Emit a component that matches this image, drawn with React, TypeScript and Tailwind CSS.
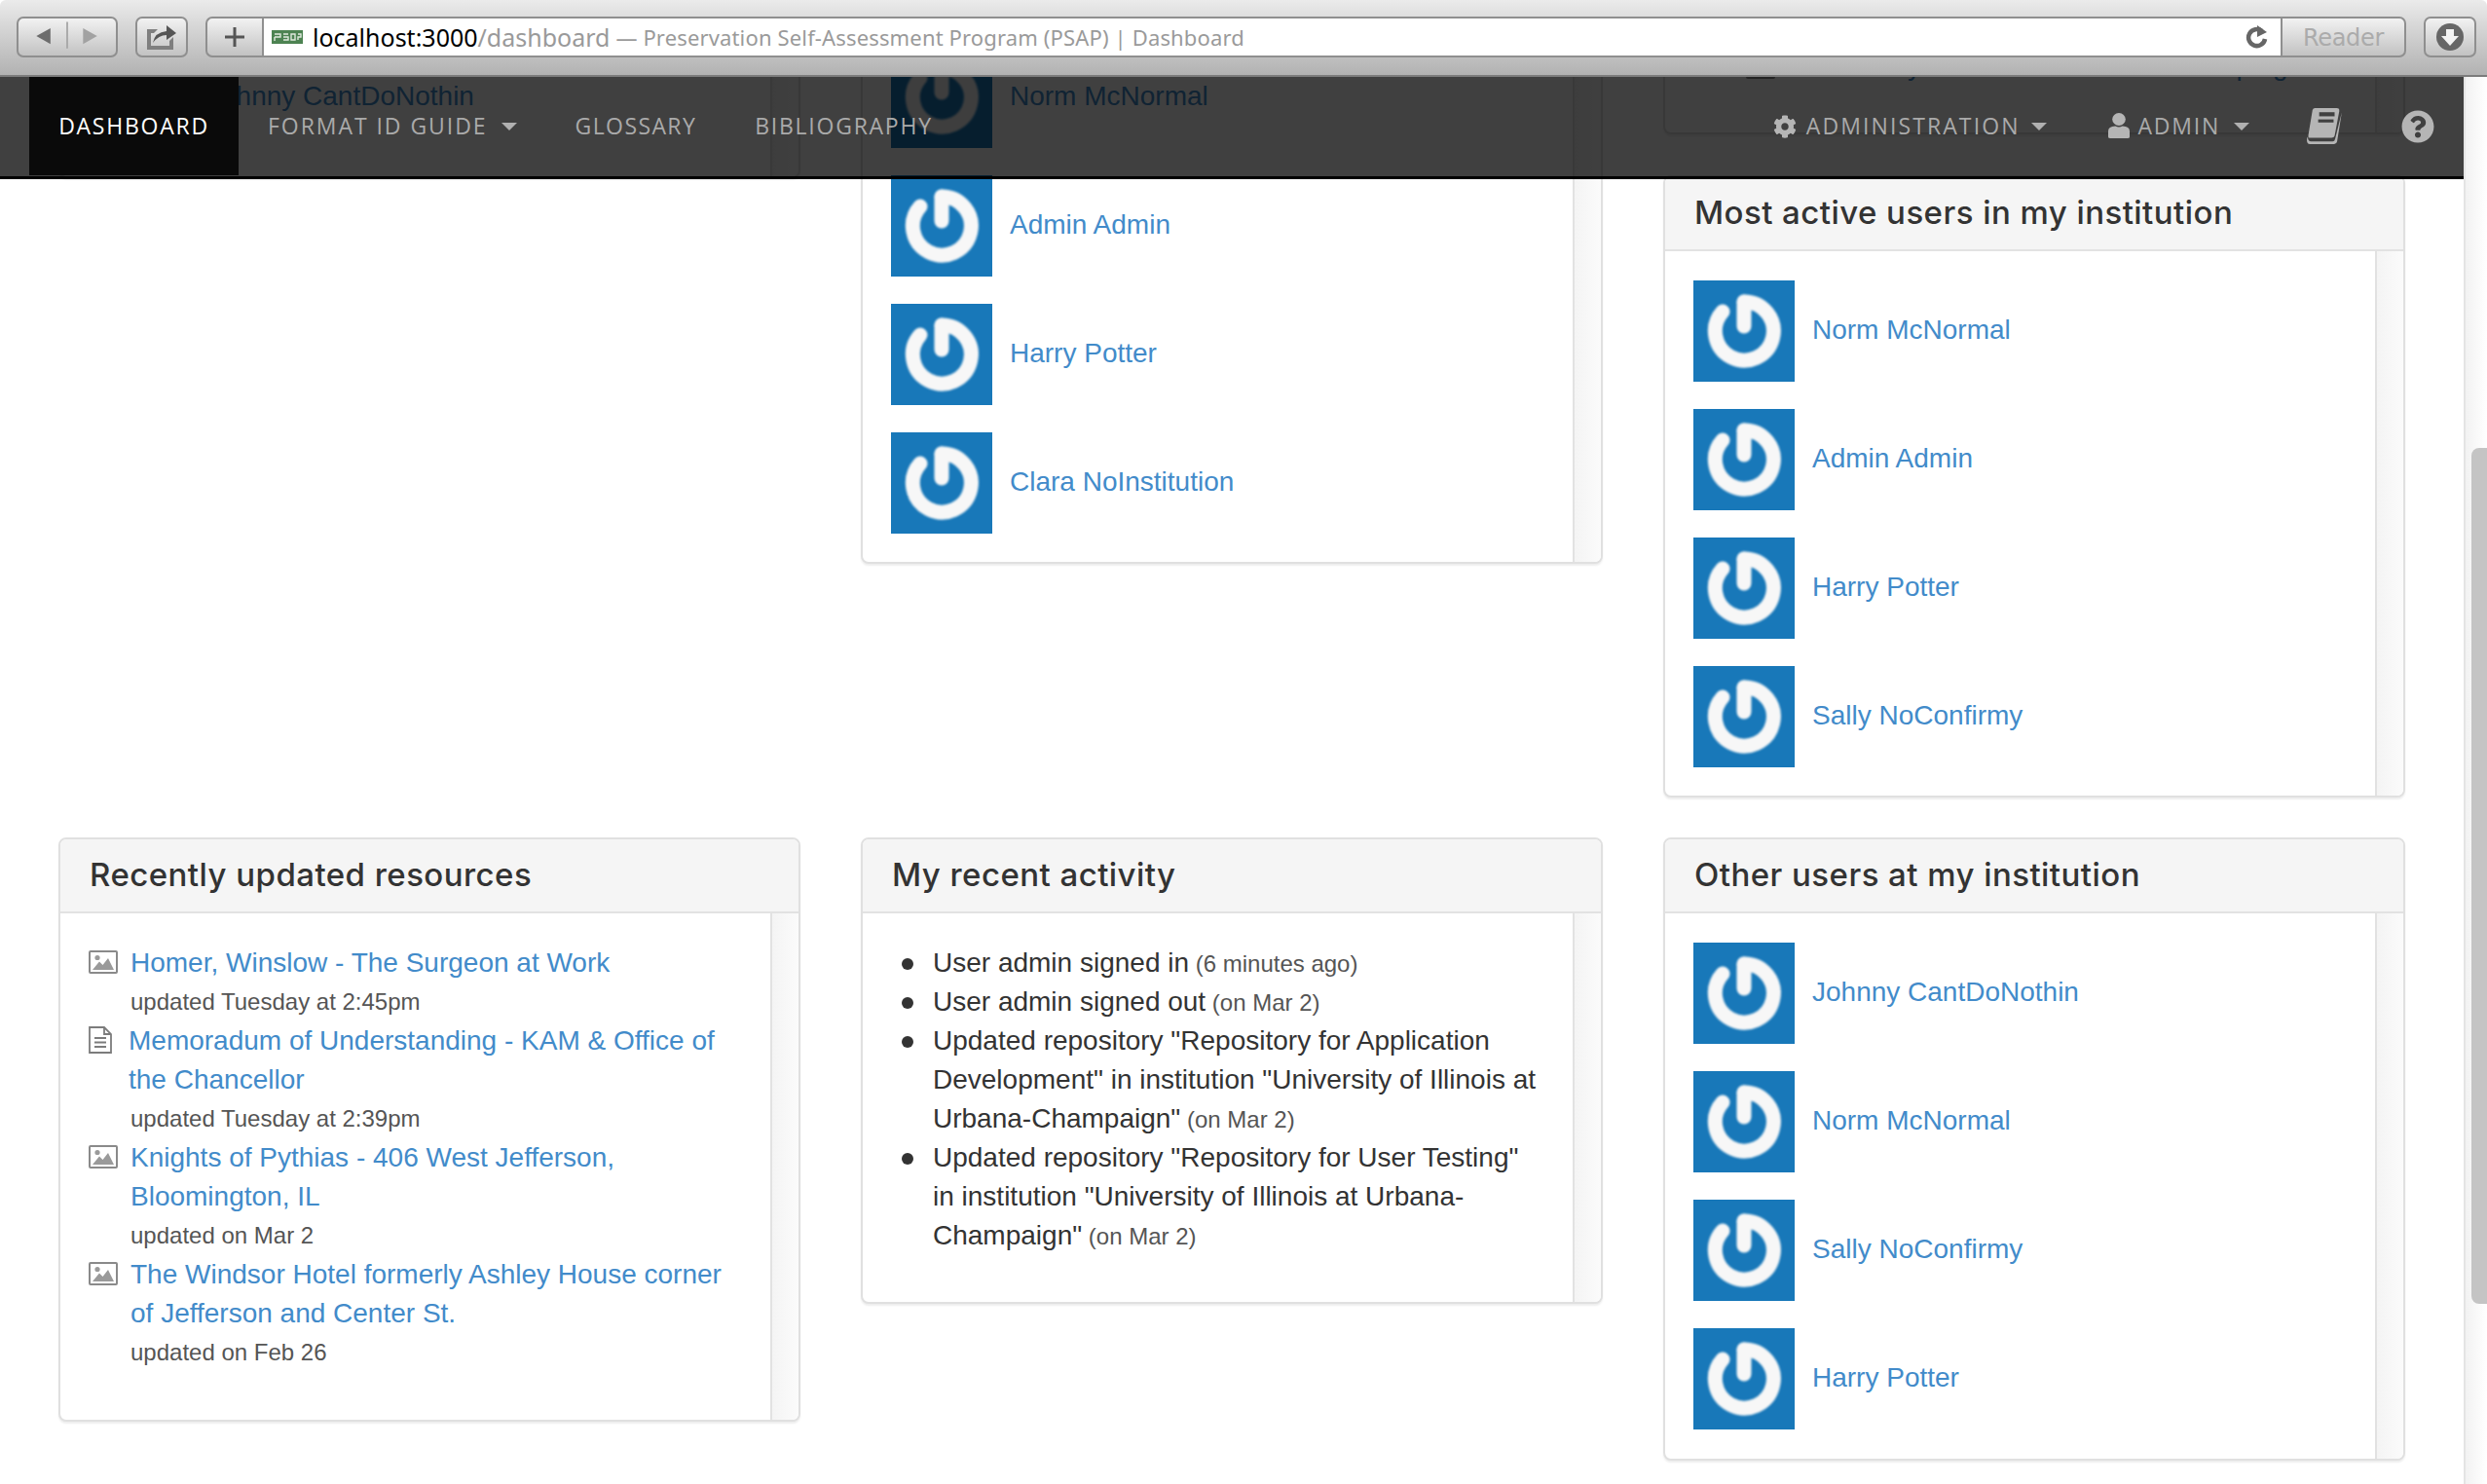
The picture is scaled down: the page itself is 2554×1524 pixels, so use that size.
import React from "react";
import { FaCog, FaQuestionCircle } from "react-icons/fa";

const Avatar = () => (
  <svg viewBox="0 0 104 104" className="w-[104px] h-[104px] shrink-0 bg-[#1878b9]">
    <g fill="none" stroke="#f7f7f7" strokeWidth="15" strokeLinecap="round" className="blur-[0.8px]">
      <path d="M52 22 A30 30 0 1 1 30 32" />
      <path d="M52 22 V47" />
    </g>
  </svg>
);

const UserRow = ({ name }: { name: string }) => (
  <div className="flex items-center gap-[18px]">
    <Avatar />
    <a className="text-[#428bca] text-[28px] leading-[40px] -mt-[3px]">{name}</a>
  </div>
);

const Panel = ({ title, children, pb = "pb-[29px]" }: { title?: string; children: React.ReactNode; pb?: string }) => (
  <section className="rounded-[8px] border-2 border-[#e0e0e0] bg-white shadow-[0_2px_2px_rgba(0,0,0,0.07)] overflow-hidden">
    <header className="h-[76px] bg-[#f5f5f5] border-b-2 border-[#e2e2e2] pl-[30px] flex items-center">
      <h3 className="font-['Inter',sans-serif] font-medium text-[33px] tracking-[0.45px] text-[#333]">{title}</h3>
    </header>
    <div className="flex items-stretch">
      <div className={`flex-1 min-w-0 pt-[30px] ${pb}`}>{children}</div>
      <div className="w-[29px] border-l-2 border-[#e2e2e2] bg-gradient-to-r from-[#f4f4f4] to-[#fbfbfb]" />
    </div>
  </section>
);

const Users = ({ names }: { names: string[] }) => (
  <div className="flex flex-col gap-[28px] pl-[29px]">
    {names.map((n) => (
      <UserRow key={n} name={n} />
    ))}
  </div>
);

const ImgIcon = () => (
  <svg viewBox="0 0 30 24" className="w-[30px] h-[24px] shrink-0 mr-[13px]">
    <rect x="1" y="1" width="28" height="22" rx="1" fill="#fff" stroke="#8a8a8a" strokeWidth="2" />
    <circle cx="9" cy="7.5" r="2.6" fill="#9a9a9a" />
    <path d="M4 20 L11 11.5 L14.5 15 L20 8 L26 20 Z" fill="#9a9a9a" />
  </svg>
);

const FileIcon = () => (
  <svg viewBox="0 0 24 28" className="w-[24px] h-[28px] shrink-0 mr-[18px]" fill="none" stroke="#7c7c7c" strokeWidth="1.8">
    <path d="M1 1 H16 L23 8 V27 H1 Z" />
    <path d="M16 1 V8 H23" />
    <path d="M6 12 H18 M6 16.5 H18 M6 21 H18" />
  </svg>
);

const Resource = ({ icon, lines, when, file }: { icon: React.ReactNode; lines: string; when: string; file?: boolean }) => (
  <div>
    <div className="flex items-start">
      <span className={file ? "mt-[5px]" : "mt-[7px]"}>{icon}</span>
      <a className={`text-[#428bca] text-[28px] leading-[40px] ${file ? "-ml-[1px]" : ""}`}>{lines}</a>
    </div>
    <div className="pl-[43px] text-[24px] leading-[40px] text-[#555]">{when}</div>
  </div>
);

const Caret = ({ small }: { small?: boolean }) => (
  <span className={`inline-block ${small ? "ml-[11px]" : "ml-[14px]"} w-0 h-0 border-x-[8px] border-x-transparent border-t-[8px] border-t-[#b0b0b0]`} />
);

const NavItem = ({ children, extra = "" }: { children: React.ReactNode; extra?: string }) => (
  <a className={`flex items-center px-[30px] text-[#aaaaaa] ${extra}`}>{children}</a>
);

const UserGlyph = () => (
  <svg viewBox="0 0 21 32" preserveAspectRatio="none" className="w-[22px] h-[26px] mr-[9px] -mt-[1px]" fill="#b5b5b5">
    <ellipse cx="10.5" cy="8" rx="6.5" ry="8" />
    <path d="M0 30 V23 Q0 17 7 16.5 Q10.5 19 14 16.5 Q21 17 21 23 V30 Q21 32 19 32 H2 Q0 32 0 30 Z" />
  </svg>
);

const BookGlyph = () => (
  <svg viewBox="0 0 36 36" className="w-[38px] h-[38px] -ml-[1px] -mr-[1px]" fill="#b5b5b5">
    <path d="M8 0 H29 Q32 0 31.5 3 L27 27 Q26.5 29 24 29 H3 Q1 29 1.5 26 L5.5 2 Q6 0 8 0 Z" />
    <path d="M34 4 L29.5 32 Q29 35 26 35 H3 Q0 35 0 31 Q0 29 1 28 Q1 32.5 4 32.5 H25 Q27 32.5 27.5 30 Z" />
    <rect x="12" y="4" width="15" height="4" fill="#404040" />
    <rect x="11" y="11" width="15" height="3" fill="#404040" />
  </svg>
);

const btn = "h-[42px] rounded-[7px] border-2 border-[#8f8f8f] bg-gradient-to-b from-[#f2f2f2] to-[#c2c2c2] flex items-center justify-center";

const Toolbar = () => (
  <div className="h-[79px] shrink-0 relative z-20 border-b-2 border-[#7c7c7c] bg-gradient-to-b from-[#ebebeb] to-[#b2b2b2] rounded-t-[6px] flex items-start pt-[17px] pl-[17px] pr-[11px]">
    <div className={`${btn} w-[104px]`}>
      <svg viewBox="0 0 104 42" className="w-[100px] h-[38px]">
        <path d="M33 11 L33 29 L17 20 Z" fill="#6d6d6d" />
        <path d="M52 4 V34" stroke="#a6a6a6" strokeWidth="2" />
        <path d="M70 11 L70 29 L86 20 Z" fill="#a2a2a2" />
      </svg>
    </div>
    <div className={`${btn} w-[54px] ml-[18px]`}>
      <svg viewBox="0 0 34 28" className="w-[34px] h-[28px]">
        <path d="M2 6 H13 L9 10 H6 V23 H25 V18 L29 14 V27 H2 Z" fill="#7f7f7f" />
        <path d="M8 20 Q10 9 22 8 V2 L32 10 L22 17 V12 Q14 12 8 20 Z" fill="#555" />
      </svg>
    </div>
    <div className={`${btn} w-[58px] ml-[18px] rounded-r-none border-r-0`}>
      <svg viewBox="0 0 20 20" className="w-[20px] h-[20px]">
        <path d="M10 0 V20 M0 10 H20" stroke="#555" strokeWidth="3" />
      </svg>
    </div>
    <div className="h-[42px] flex-1 min-w-0 border-y-2 border-l-2 border-[#8f8f8f] bg-white flex items-center pl-[8px] font-['Noto_Sans',sans-serif] whitespace-nowrap">
      <svg viewBox="0 0 32 14" className="w-[32px] h-[14px] mr-[10px] shrink-0">
        <rect width="32" height="14" fill="#4d8352" />
        <path d="M3 4 H9 V7 H3 M3 7 V11 M12 4 H17 M12 7 H17 V10 H12 M20 4 H24 V10 H20 Z M27 4 H30 V7 H27 V10" fill="none" stroke="#dfe9dd" strokeWidth="1.4" />
      </svg>
      <span className="text-[25px] leading-[38px] text-black">localhost:3000</span>
      <span className="text-[25px] leading-[38px] text-[#9a9a9a]">/dashboard</span>
      <span className="text-[22px] leading-[38px] text-[#9a9a9a] ml-[6px] tracking-[0.15px]">— Preservation Self-Assessment Program (PSAP) | Dashboard</span>
      <svg viewBox="0 0 24 24" className="w-[24px] h-[26px] ml-auto mr-[12px]" fill="none">
        <path d="M17 6 A8.5 8.5 0 1 0 20 14" stroke="#666" strokeWidth="4.5" />
        <path d="M12 0 L22 7 L12 12 Z" fill="#666" />
      </svg>
    </div>
    <div className={`${btn} w-[129px] rounded-l-none text-[24px] text-[#ababab] font-['DejaVu_Sans',sans-serif] tracking-[-0.3px]`}>
      <span className="mt-[2px]">Reader</span>
    </div>
    <div className={`${btn} w-[54px] ml-[18px]`}>
      <svg viewBox="0 0 28 28" className="w-[28px] h-[28px]">
        <circle cx="14" cy="14" r="14" fill="#666" />
        <path d="M10 6 H18 V13 H23 L14 23 L5 13 H10 Z" fill="#f2f2f2" />
      </svg>
    </div>
  </div>
);

const Nav = () => (
  <nav className="absolute top-0 left-0 right-0 h-[105px] z-10 bg-black/75 border-b-[3px] border-black flex items-start text-[23px] tracking-[1.75px] font-['Open_Sans',sans-serif]">
    <a className="ml-[30px] w-[215px] h-[101px] bg-[#0a0a0a] text-white flex items-center justify-center">DASHBOARD</a>
    <div className="flex h-[101px]">
      <NavItem extra="tracking-[1.95px]">FORMAT ID GUIDE<Caret /></NavItem>
      <NavItem extra="tracking-[1.4px]">GLOSSARY</NavItem>
      <NavItem>BIBLIOGRAPHY</NavItem>
    </div>
    <div className="flex h-[101px] ml-auto pr-[30px] items-stretch">
      <NavItem extra="tracking-[2.1px] mr-[3px]"><FaCog className="w-[24px] h-[24px] text-[#b5b5b5] mr-[10px]" />ADMINISTRATION<Caret small /></NavItem>
      <NavItem><UserGlyph />ADMIN<Caret /></NavItem>
      <NavItem><BookGlyph /></NavItem>
      <a className="flex items-center pl-[30px]"><FaQuestionCircle className="w-[34px] h-[34px] text-[#b5b5b5]" /></a>
    </div>
  </nav>
);

const Muted = ({ children }: { children: React.ReactNode }) => <span className="text-[24px] leading-none text-[#555]"> {children}</span>;

const Li = ({ children }: { children: React.ReactNode }) => (
  <li className="relative before:absolute before:-left-[32px] before:top-[15px] before:w-[12px] before:h-[12px] before:rounded-full before:bg-[#333]">{children}</li>
);

export default function App() {
  return (
    <div className="w-[2554px] h-[1524px] overflow-hidden flex flex-col bg-white font-['Liberation_Sans',Arial,sans-serif] text-[#333]">
      <Toolbar />
      <div className="flex-1 min-h-0 flex">
        <div className="relative flex-1 min-w-0 overflow-hidden">
          <Nav />
          <main className="-mt-[139px] px-[60px] grid grid-cols-3 gap-x-[62px] gap-y-[41px] items-start">
            <Panel>
              <Users names={["Johnny CantDoNothin"]} />
            </Panel>
            <Panel>
              <Users names={["Norm McNormal", "Admin Admin", "Harry Potter", "Clara NoInstitution"]} />
            </Panel>
            <div className="flex flex-col gap-[42px]">
              <Panel pb="pb-[48px]">
                <div className="flex items-start pl-[83px] whitespace-nowrap overflow-hidden">
                  <span className="mt-[9px]"><ImgIcon /></span>
                  <a className="text-[#428bca] text-[28px] leading-[40px]">Review my assessment tools or a sloping</a>
                </div>
              </Panel>
              <Panel title="Most active users in my institution">
                <Users names={["Norm McNormal", "Admin Admin", "Harry Potter", "Sally NoConfirmy"]} />
              </Panel>
            </div>

            <Panel title="Recently updated resources" pb="pb-[49px]">
              <div className="pl-[29px] pr-[28px] mt-[1px]">
                <Resource icon={<ImgIcon />} lines="Homer, Winslow - The Surgeon at Work" when="updated Tuesday at 2:45pm" />
                <Resource file icon={<FileIcon />} lines="Memoradum of Understanding - KAM & Office of the Chancellor" when="updated Tuesday at 2:39pm" />
                <Resource icon={<ImgIcon />} lines="Knights of Pythias - 406 West Jefferson, Bloomington, IL" when="updated on Mar 2" />
                <Resource icon={<ImgIcon />} lines="The Windsor Hotel formerly Ashley House corner of Jefferson and Center St." when="updated on Feb 26" />
              </div>
            </Panel>
            <Panel title="My recent activity" pb="pb-[48px]">
              <ul className="pl-[72px] pr-[30px] mt-[1px] text-[28px] leading-[40px] text-[#333]">
                <Li>User admin signed in<Muted>(6 minutes ago)</Muted></Li>
                <Li>User admin signed out<Muted>(on Mar 2)</Muted></Li>
                <Li>Updated repository "Repository for Application Development" in institution "University of Illinois at Urbana-Champaign"<Muted>(on Mar 2)</Muted></Li>
                <Li>Updated repository "Repository for User Testing" in institution "University of Illinois at Urbana-Champaign"<Muted>(on Mar 2)</Muted></Li>
              </ul>
            </Panel>
            <Panel title="Other users at my institution" pb="pb-[30px]">
              <Users names={["Johnny CantDoNothin", "Norm McNormal", "Sally NoConfirmy", "Harry Potter"]} />
            </Panel>
          </main>
        </div>
        <aside className="w-[24px] shrink-0 border-l-2 border-[#e4e4e4] bg-gradient-to-r from-[#f2f2f2] to-white pl-[6px] pt-[381px]">
          <div className="h-[879px] rounded-l-[8px] bg-[#c4c4c4]" />
        </aside>
      </div>
    </div>
  );
}
